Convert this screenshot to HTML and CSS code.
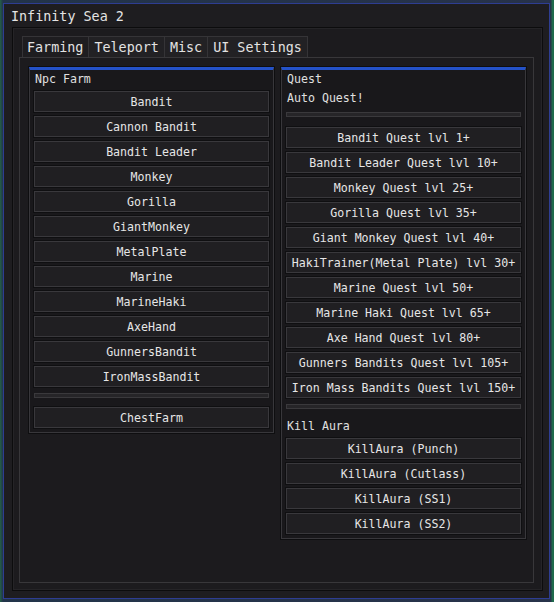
FILE: index.html
```html
<!DOCTYPE html>
<html>
<head>
<meta charset="utf-8">
<link rel="stylesheet" href="styles.css">
</head>
<body>
<div class="window">
  <div class="titlebar">Infinity Sea 2</div>
  <div class="frame">
    <div class="tabs">
      <div class="tab active">Farming</div>
      <div class="tab">Teleport</div>
      <div class="tab">Misc</div>
      <div class="tab">UI Settings</div>
    </div>
    <div class="panel">
      <div class="group group-left">
        <div class="label">Npc Farm</div>
        <div class="btn">Bandit</div>
        <div class="btn">Cannon Bandit</div>
        <div class="btn">Bandit Leader</div>
        <div class="btn">Monkey</div>
        <div class="btn">Gorilla</div>
        <div class="btn">GiantMonkey</div>
        <div class="btn">MetalPlate</div>
        <div class="btn">Marine</div>
        <div class="btn">MarineHaki</div>
        <div class="btn">AxeHand</div>
        <div class="btn">GunnersBandit</div>
        <div class="btn">IronMassBandit</div>
        <div class="bar bar-left"></div>
        <div class="btn">ChestFarm</div>
      </div>
      <div class="group group-right">
        <div class="label">Quest</div>
        <div class="label label-tight">Auto Quest!</div>
        <div class="bar"></div>
        <div class="btn">Bandit Quest lvl 1+</div>
        <div class="btn">Bandit Leader Quest lvl 10+</div>
        <div class="btn">Monkey Quest lvl 25+</div>
        <div class="btn">Gorilla Quest lvl 35+</div>
        <div class="btn">Giant Monkey Quest lvl 40+</div>
        <div class="btn">HakiTrainer(Metal Plate) lvl 30+</div>
        <div class="btn">Marine Quest lvl 50+</div>
        <div class="btn">Marine Haki Quest lvl 65+</div>
        <div class="btn">Axe Hand Quest lvl 80+</div>
        <div class="btn">Gunners Bandits Quest lvl 105+</div>
        <div class="btn">Iron Mass Bandits Quest lvl 150+</div>
        <div class="bar bar-tight"></div>
        <div class="label">Kill Aura</div>
        <div class="btn">KillAura (Punch)</div>
        <div class="btn">KillAura (Cutlass)</div>
        <div class="btn">KillAura (SS1)</div>
        <div class="btn">KillAura (SS2)</div>
      </div>
    </div>
  </div>
</div>
</body>
</html>
```
FILE: styles.css
```css
html, body {
  margin: 0;
  padding: 0;
}
body {
  width: 554px;
  height: 602px;
  background: linear-gradient(90deg, #236046 0px, #22344a 3px, #27324a 551px, #1f6a4c 552px);
  font-family: "DejaVu Sans Mono", "Liberation Mono", monospace;
  color: #dedede;
  overflow: hidden;
}
.window {
  margin: 3px 0 0 3px;
  width: 547px;
  height: 596px;
  box-sizing: border-box;
  border: 1px solid #2e3d92;
  background: #1e1d20;
  display: flex;
  flex-direction: column;
}
.titlebar {
  height: 23px;
  line-height: 26px;
  padding-left: 7px;
  font-size: 13.4px;
  color: #e4e4e4;
}
.frame {
  flex: 1;
  margin: 0 6px 7px 8px;
  border: 1px solid #0c0c0d;
  box-shadow: inset 0 0 0 1px #252427;
  background: #1c1b1e;
  padding: 8px 8px 7px 6px;
  display: flex;
  flex-direction: column;
}
.tabs {
  display: flex;
  height: 21px;
  margin-left: 3px;
}
.tab {
  font-size: 13.4px;
  line-height: 22px;
  padding: 0 5px;
  border: 1px solid #353437;
  border-left: none;
  border-bottom: none;
  background: #222124;
  color: #e2e2e2;
}
.tab.active {
  border-left: 1px solid #353437;
  padding-left: 4px;
  background: #1e1d20;
}
.panel {
  flex: 1;
  border: 1px solid #38373a;
  padding: 9px 7px 0 9px;
  display: flex;
  align-items: flex-start;
  gap: 7px;
}
.group {
  width: 245px;
  box-sizing: border-box;
  border: 1px solid #38373b;
  border-top: 3px solid #2452c9;
  background: #19181b;
  box-shadow: 0 0 0 1px #0e0e10;
  padding: 0 4px 4px;
  display: flex;
  flex-direction: column;
  gap: 4px;
  font-size: 11.6px;
}
.label {
  height: 17px;
  line-height: 19px;
  padding-left: 1px;
  color: #e0e0e0;
}
.label-tight {
  margin-top: -2px;
}
.btn {
  height: 21px;
  box-sizing: border-box;
  border: 1px solid #39383c;
  box-shadow: 0 0 0 1px #0f0f11;
  background: #201f22;
  text-align: center;
  line-height: 21px;
  color: #e6e6e6;
  white-space: nowrap;
}
.bar {
  height: 5px;
  box-sizing: border-box;
  border: 1px solid #3a393c;
  background: #262528;
  margin: 2px 0 6px;
}
.bar-left {
  margin-bottom: 5px;
}
.bar-tight {
  margin-bottom: 4px;
}
```
